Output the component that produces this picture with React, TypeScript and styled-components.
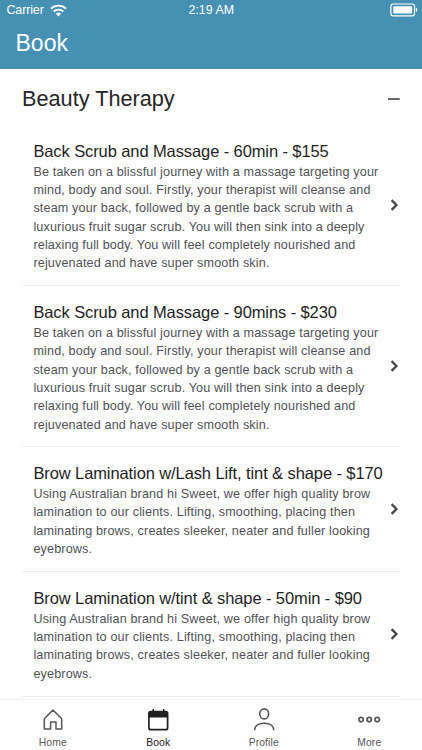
import React from 'react';
import styled, { createGlobalStyle } from 'styled-components';

const GlobalStyle = createGlobalStyle`
  * { box-sizing: border-box; }
  body { margin: 0; background: #fff; font-family: "Liberation Sans", Arial, sans-serif; }
`;

const Screen = styled.div`
  width: 422px;
  height: 750px;
  display: flex;
  flex-direction: column;
  overflow: hidden;
  background: #fff;
`;

const Header = styled.header`
  flex: none;
  height: 69px;
  background: #4691b3;
  color: #fff;
`;

const StatusBar = styled.div`
  height: 20px;
  padding: 0 4px 0 6.5px;
  display: grid;
  grid-template-columns: 1fr auto 1fr;
  align-items: center;
  font-size: 12.4px;
  line-height: 20px;
`;

const Carrier = styled.div`
  display: flex;
  align-items: center;
  gap: 6px;
  letter-spacing: -0.1px;
`;

const Clock = styled.span`
  margin-right: 2px;
`;

const Battery = styled.div`
  display: flex;
  justify-content: flex-end;
`;

const PageTitle = styled.h1`
  margin: 0;
  padding: 8px 0 0 15.5px;
  font-size: 23px;
  line-height: 30px;
  font-weight: 400;
`;

const Content = styled.main`
  flex: 1;
  min-height: 0;
  overflow: hidden;
  padding: 0 22px;
`;

const SectionHeader = styled.div`
  height: 56px;
  display: flex;
  align-items: center;
  justify-content: space-between;
  padding: 4px 0 0;
`;

const SectionTitle = styled.h2`
  margin: 0;
  font-size: 21.7px;
  line-height: 28px;
  font-weight: 400;
  color: #252525;
`;

const Item = styled.article<{ $height: number }>`
  height: ${(p) => p.$height}px;
  padding: 15.6px 0 0 11.4px;
  border-bottom: 1px solid #ececee;
  display: flex;
  justify-content: space-between;
  align-items: flex-start;
`;

const ItemTitle = styled.h3`
  margin: 0;
  font-size: 16.5px;
  line-height: 20px;
  font-weight: 400;
  color: #1e1e1e;
  white-space: nowrap;
  letter-spacing: -0.1px;
`;

const Description = styled.p`
  margin: 2px 0 0;
  width: 350px;
  font-size: 12.6px;
  line-height: 18.36px;
  letter-spacing: 0.15px;
  color: #505057;
  white-space: pre;
`;

const ArrowSlot = styled.div`
  flex: none;
  width: 10px;
  align-self: center;
  display: flex;
  margin: 0 0 16px -10px;
  svg { display: block; }
`;

const TabBar = styled.nav`
  flex: none;
  height: 51px;
  border-top: 1px solid #f1f1f2;
  background: #fff;
  display: grid;
  grid-template-columns: repeat(4, 1fr);
`;

const Tab = styled.div<{ $active?: boolean }>`
  display: flex;
  flex-direction: column;
  align-items: center;
  padding-top: 8px;
  color: ${(p) => (p.$active ? '#202024' : '#55555b')};
  svg { display: block; }
`;

const TabLabel = styled.span`
  font-size: 10.3px;
  line-height: 12px;
  margin-top: 5px;
  letter-spacing: 0.15px;
`;

const WifiIcon = () => (
  <svg width="17" height="13" viewBox="0 0 17 13" fill="none" stroke="#fff" strokeWidth="1.9">
    <path d="M1 4.6a11 11 0 0 1 15 0" />
    <path d="M3.7 7.5a7 7 0 0 1 9.6 0" />
    <path d="M8.5 12.4 5.9 9.7a3.8 3.8 0 0 1 5.2 0Z" fill="#fff" stroke="none" />
  </svg>
);

const BatteryIcon = () => (
  <svg width="28" height="14" viewBox="0 0 28 14">
    <rect x="0.9" y="1" width="23.6" height="11.8" rx="2.4" fill="none" stroke="#fff" strokeWidth="1.2" />
    <rect x="3.3" y="3.2" width="18.8" height="7.4" rx="0.8" fill="#fff" />
    <path d="M25.8 4.6c1.9.7 1.9 3.9 0 4.6Z" fill="#fff" />
  </svg>
);

const MinusIcon = () => (
  <svg width="12" height="2" viewBox="0 0 12 2">
    <path d="M0 1h11.7" stroke="#252525" strokeWidth="1.4" />
  </svg>
);

const ArrowIcon = () => (
  <svg width="10" height="12" viewBox="0 0 10 12" fill="none" stroke="#48484c" strokeWidth="2.4">
    <path d="m1.6 1.2 4.8 4.8-4.8 4.8" />
  </svg>
);

const HomeIcon = () => (
  <svg width="24" height="24" viewBox="0 0 24 24" fill="none" stroke="currentColor" strokeWidth="1.5" strokeLinejoin="round">
    <path d="M3.3 10.8 12 2l8.7 8.8V21H15v-7H9.6v7H3.3Z" />
  </svg>
);

const CalendarIcon = () => (
  <svg width="24" height="24" viewBox="0 0 24 24">
    <path d="M7.2 1.9v3M17.7 1.9v3" stroke="currentColor" strokeWidth="1.8" strokeLinecap="round" />
    <rect x="2.9" y="3.5" width="18.7" height="18.2" rx="2" fill="none" stroke="currentColor" strokeWidth="1.7" />
    <path d="M2.6 9.5V5c0-1.2.7-2 2-2h15.2c1.3 0 2 .8 2 2v4.5Z" fill="currentColor" />
  </svg>
);

const ProfileIcon = () => (
  <svg width="24" height="24" viewBox="0 0 24 24" fill="none" stroke="currentColor" strokeWidth="1.6">
    <ellipse cx="12.2" cy="5.9" rx="4.4" ry="5" />
    <path d="M2.6 22.2c0-4.2 3.7-6.9 9.6-6.9s9.6 2.7 9.6 6.9" />
  </svg>
);

const MoreIcon = () => (
  <svg width="24" height="24" viewBox="0 0 24 24" fill="none" stroke="currentColor" strokeWidth="1.7">
    <circle cx="4.1" cy="11.6" r="2.2" />
    <circle cx="12.2" cy="11.6" r="2.2" />
    <circle cx="20.2" cy="11.6" r="2.2" />
  </svg>
);

const massage = `Be taken on a blissful journey with a massage targeting your
mind, body and soul. Firstly, your therapist will cleanse and
steam your back, followed by a gentle back scrub with a
luxurious fruit sugar scrub. You will then sink into a deeply
relaxing full body. You will feel completely nourished and
rejuvenated and have super smooth skin.`;

const brows = `Using Australian brand hi Sweet, we offer high quality brow
lamination to our clients. Lifting, smoothing, placing then
laminating brows, creates sleeker, neater and fuller looking
eyebrows.`;

const services = [
  { title: 'Back Scrub and Massage - 60min - $155', text: massage, height: 161.2 },
  { title: 'Back Scrub and Massage - 90mins - $230', text: massage, height: 161.2 },
  { title: 'Brow Lamination w/Lash Lift, tint & shape - $170', text: brows, height: 124.6 },
  { title: 'Brow Lamination w/tint & shape - 50min - $90', text: brows, height: 124.6 },
];

const tabs = [
  { label: 'Home', Icon: HomeIcon },
  { label: 'Book', Icon: CalendarIcon, active: true },
  { label: 'Profile', Icon: ProfileIcon },
  { label: 'More', Icon: MoreIcon },
];

export default function App() {
  return (
    <Screen>
      <GlobalStyle />
      <Header>
        <StatusBar>
          <Carrier>Carrier <WifiIcon /></Carrier>
          <Clock>2:19 AM</Clock>
          <Battery><BatteryIcon /></Battery>
        </StatusBar>
        <PageTitle>Book</PageTitle>
      </Header>
      <Content>
        <SectionHeader>
          <SectionTitle>Beauty Therapy</SectionTitle>
          <MinusIcon />
        </SectionHeader>
        {services.map((s) => (
          <Item key={s.title} $height={s.height}>
            <div>
              <ItemTitle>{s.title}</ItemTitle>
              <Description>{s.text}</Description>
            </div>
            <ArrowSlot><ArrowIcon /></ArrowSlot>
          </Item>
        ))}
      </Content>
      <TabBar>
        {tabs.map(({ label, Icon, active }) => (
          <Tab key={label} $active={active}>
            <Icon />
            <TabLabel>{label}</TabLabel>
          </Tab>
        ))}
      </TabBar>
    </Screen>
  );
}
